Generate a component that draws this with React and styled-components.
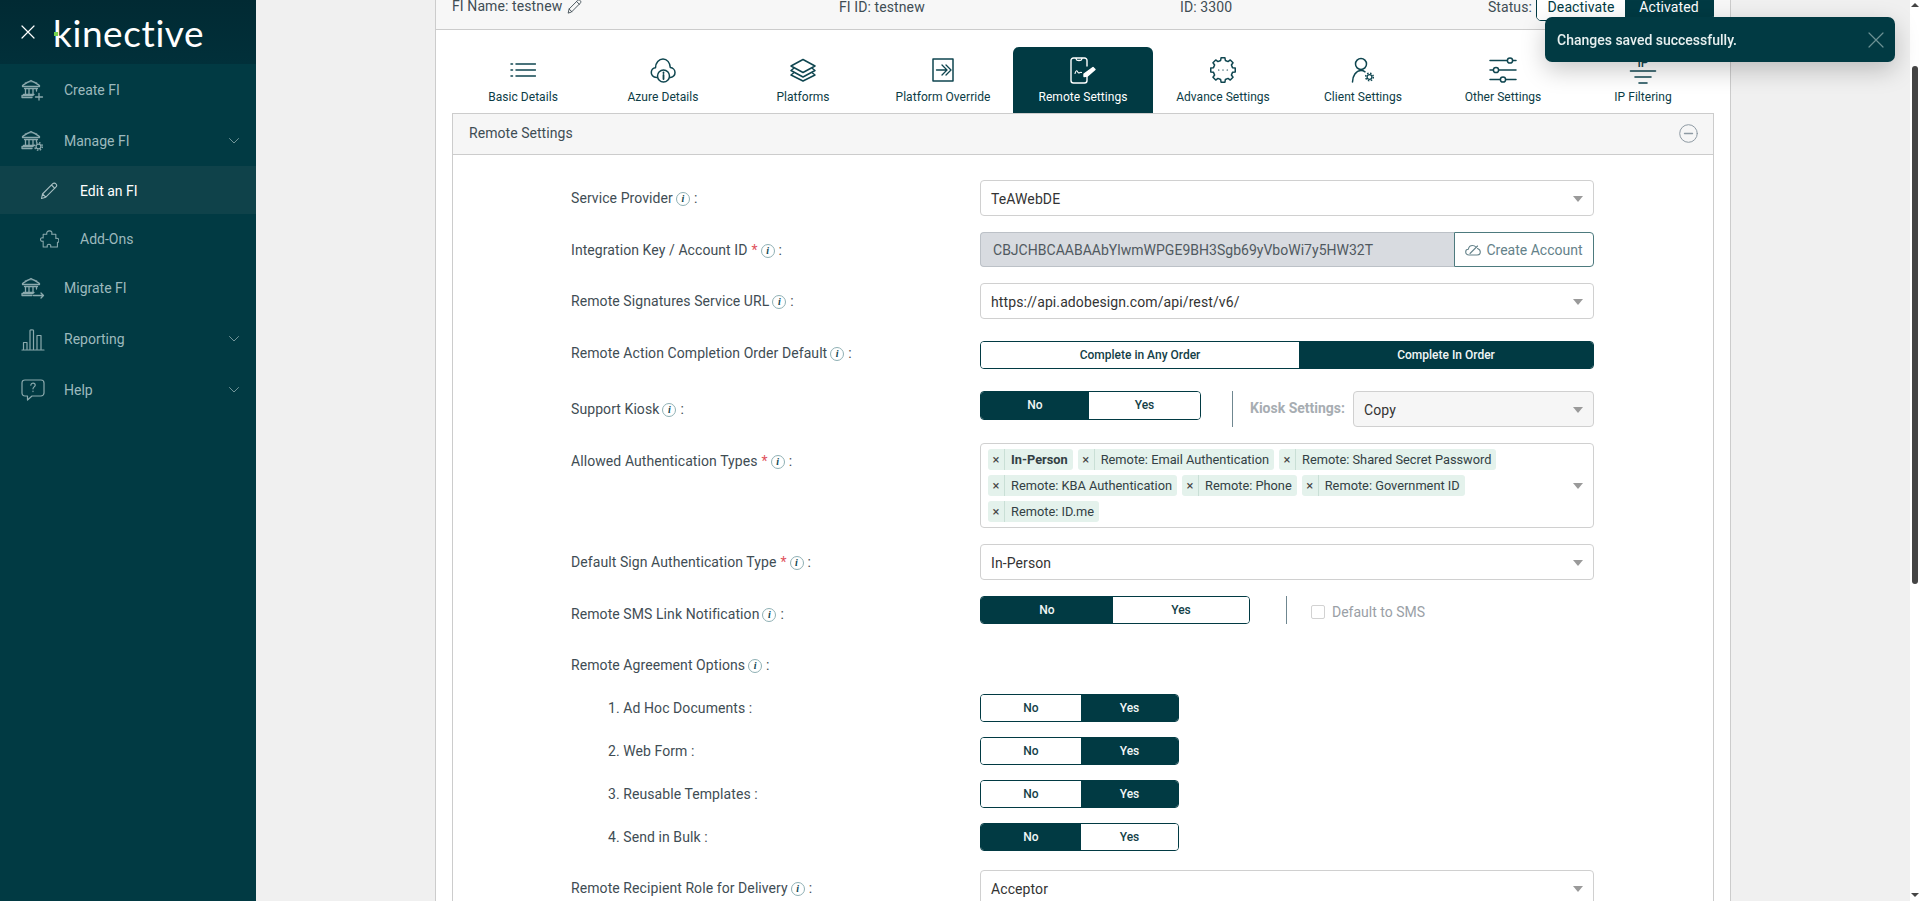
import React from "react";
import styled, { createGlobalStyle } from "styled-components";

const DARK = "#013a43";
const FONT = `Roboto, "Liberation Sans", sans-serif`;

const GlobalStyle = createGlobalStyle`
  html, body { margin: 0; height: 100%; overflow: hidden; }
  body { font-family: ${FONT}; font-size: 14px; color: #3d4b52; background: #f0f0f0; }
  #root { height: 100%; }
  * { box-sizing: border-box; }
`;

/* ---------- icons ---------- */
const Svg = ({ size = 24, w, h, vb, sw = 1.3, children }) => (
  <svg
    width={w || size}
    height={h || size}
    viewBox={vb || `0 0 ${w || size} ${h || size}`}
    fill="none"
    stroke="currentColor"
    strokeWidth={sw}
    strokeLinecap="round"
    strokeLinejoin="round"
  >
    {children}
  </svg>
);

const MiniGear = ({ x, y }) => (
  <g>
    <circle cx={x} cy={y} r="2.4" strokeWidth="1.2" />
    <circle cx={x} cy={y} r="3.8" strokeWidth="1.5" strokeDasharray="1.5 1.5" strokeLinecap="butt" />
  </g>
);

const Bank = ({ children }) => (
  <Svg w={24} h={22}>
    <path d="M1.5 6.5C4 5 7 3 10 1.500C13 3 16 5 18.500 6.500V7.500H1.500Z" />
    <path d="M4 3.800C7 2.300 13 2.300 16 3.800" strokeWidth="0.8" />
    <path d="M3.500 9.500H16.500M4.500 9.500V15M8 9.500V15M12 9.500V15M15.500 9.500V12" />
    <path d="M2.500 15.500H13M1 18.500V16.500H12M1 18.500H11" />
    {children}
  </Svg>
);

const CreateIcon = () => (
  <Bank>
    <path d="M18 14.500V21M14.500 18H21.500" />
  </Bank>
);
const ManageIcon = () => (
  <Bank>
    <MiniGear x={17.500} y={16.500} />
  </Bank>
);
const MigrateIcon = () => (
  <Bank>
    <path d="M12.500 18.500H22.500M20 16L22.500 18.500L20 21" />
  </Bank>
);
const EditIcon = ({ size = 18 }) => (
  <Svg size={size} vb="0 0 18 18" sw={1.1}>
    <path d="M1.500 16.500L2.500 12L12.800 1.700C13.600 0.900 15 0.900 15.900 1.900C16.800 2.800 16.800 4.100 16 4.900L5.800 15.200ZM2.500 12L5.800 15.200M11.500 3L14.800 6.300" />
  </Svg>
);
const PuzzleIcon = () => (
  <Svg w={19} h={20} vb="0 0 18 17" sw={1}>
    <path d="M6.500 4H3V7.500C1 6.800 0.500 8 0.500 9S1.300 11.200 3 10.500V16H7C6.300 14 7.500 13.500 8.500 13.500S10.700 14.300 10 16H16.500V11.500C18 12 17.800 10.500 17.800 9.500S17 7.300 15 8V4H11C11.800 2.300 11 0.800 9 0.800S6 2.300 6.500 4Z" />
  </Svg>
);
const ChartIcon = () => (
  <Svg w={24} h={24} sw={1.2}>
    <path d="M1 23H23M2.500 22V15.500H6V22M9 22V3.500C9 2.500 12.500 2.500 12.500 3.500V22M16 22V8.500H20V22" />
  </Svg>
);
const HelpIcon = () => (
  <Svg w={24} h={22} sw={1.2}>
    <path d="M4 1H20C21.500 1 23 2 23 4V14C23 15.500 21.500 17 20 17H11L6.500 21V17H4C2 17 1 15.500 1 14V4C1 2 2 1 4 1Z" />
    <path d="M9.800 6.200C10 4.800 11 4.200 12 4.200C13.300 4.200 14.200 5 14.200 6.200C14.200 7.800 12 8 12 9.800M12 12.200V12.600" />
  </Svg>
);
const Chevron = () => (
  <Svg w={10} h={6} sw={0.9}>
    <path d="M0.500 0.500L5 5L9.500 0.500" />
  </Svg>
);
const CloseX = ({ size }) => (
  <Svg size={size} sw={1.200}>
    <path d={`M1 1L${size - 1} ${size - 1}M${size - 1} 1L1 ${size - 1}`} />
  </Svg>
);

const ListIcon = () => (
  <Svg w={26} h={16} sw={1.500}>
    <path d="M1 2H2.500M1 8H2.500M1 14H2.500" />
    <path d="M6 2H25.500M6 8H25.500M6 14H25.500" />
  </Svg>
);
const CloudIcon = () => (
  <Svg w={26} h={26} sw={1.500}>
    <path d="M6.500 20.500C3 20.500 1 17.800 1.300 15C1.600 12.500 3.500 11 5.500 10.800C5.500 6 9 2 13 2C17 2 20 5.500 20.300 10.500C23 10.800 25 13 25 15.500C25 18 23.300 20 20.500 20.500" />
    <circle cx="13.500" cy="19" r="6" />
    <path d="M13.500 18V22M13.500 15.500V16" strokeWidth="1.800" />
  </Svg>
);
const LayersIcon = () => (
  <Svg w={26} h={24} sw={1.500}>
    <path d="M13 1.500L25 8L13 14.500L1 8Z" />
    <path d="M3.500 10.500L1 12.500L13 19L25 12.500L22.500 10.500" />
    <path d="M3.500 15L1 17L13 23L25 17L22.500 15" />
  </Svg>
);
const OverrideIcon = () => (
  <Svg w={22} h={24} sw={1.500}>
    <path d="M1 1H21V23H1Z" />
    <path d="M4.500 12H14M10 7L15 12L10 17M14 7L19 12L14 17" strokeWidth="1.300" />
  </Svg>
);
const PhoneIcon = () => (
  <Svg w={26} h={27} sw={1.400}>
    <path d="M17 9V3.500C17 2 16 1 14.500 1H3.500C2 1 1 2 1 3.500V23.500C1 25 2 26 3.500 26H14.500C16 26 17 25 17 23.500V17" />
    <path d="M6 1.500C6.500 3.500 7 3.500 9 3.500C11 3.500 11.500 3.500 12 1.500" />
    <path d="M5 16.500C6 13 7 13 8 15.500C9 17 10 14.500 11.500 15.500" strokeWidth="1.100" />
    <path d="M14 17L23 10.500L25 12.500L17.500 19L14 19.500Z" fill="currentColor" />
  </Svg>
);

// square-toothed outline for the Advance Settings tab
const gearPath = (c, outer, inner, teeth) => {
  const step = (Math.PI * 2) / teeth;
  const pts = [];
  for (let i = 0; i < teeth; i++) {
    const a = i * step - Math.PI / 2;
    [
      [inner, a - step * 0.31],
      [outer, a - step * 0.2],
      [outer, a + step * 0.2],
      [inner, a + step * 0.31],
    ].forEach(([r, t]) => pts.push(`${(c + r * Math.cos(t)).toFixed(2)} ${(c + r * Math.sin(t)).toFixed(2)}`));
  }
  return `M${pts.join("L")}Z`;
};
const GearDotsIcon = () => (
  <Svg size={26} sw={1.500}>
    <path d={gearPath(13, 12.400, 9.800, 8)} />
    <path d="M8.500 13H8.900M12.800 13H13.200M17.100 13H17.500" strokeWidth="1.200" />
  </Svg>
);
const UserGearIcon = () => (
  <Svg w={24} h={26} sw={1.500}>
    <circle cx="10" cy="7" r="5.500" />
    <path d="M1.500 25C1.500 19 5 13.500 10 13.500C11.500 13.500 13 14 14 14.800" />
    <MiniGear x={18.500} y={20} />
  </Svg>
);
const SlidersIcon = () => (
  <Svg w={28} h={26} sw={1.500}>
    <path d="M1 3.500H18M24 3.500H27M1 13H4M10 13H27M1 22.500H11M17 22.500H27" />
    <circle cx="21" cy="3.500" r="2.600" />
    <circle cx="7" cy="13" r="2.600" />
    <circle cx="14" cy="22.500" r="2.600" />
  </Svg>
);
const FilterIcon = () => (
  <Svg w={28} h={36} sw={1.600}>
    <text x="14" y="14.500" textAnchor="middle" fontSize="12" fontWeight="500" fill="currentColor" stroke="none" fontFamily="Roboto">IP</text>
    <path d="M1.500 19H26.500M6 25H22M10 31H18" />
  </Svg>
);
const CloudCheck = () => (
  <Svg w={16} h={12} sw={1.100}>
    <path d="M4 11C2 11 0.700 9.700 0.700 8C0.700 6.500 2 5.300 3.300 5.300C3.700 3 5.500 1.500 7.500 1.500C9 1.500 10 2 10.800 3M12.500 4.500C14 5 15.300 6.300 15.300 8C15.300 9.700 14 11 12 11H4" />
    <path d="M5 9.500L12.500 2" />
  </Svg>
);
const MinusCircle = () => (
  <Svg size={19} sw={1}>
    <circle cx="9.500" cy="9.500" r="8.800" stroke="#8e9aa3" />
    <path d="M5.500 9.500H13.500" stroke="#8e9aa3" strokeWidth="1.400" />
  </Svg>
);

/* ---------- shell ---------- */
const Page = styled.div`
  display: flex;
  height: 100vh;
  overflow: hidden;
`;
const Sidebar = styled.aside`
  width: 256px;
  flex: none;
  background: ${DARK};
`;
const Brand = styled.div`
  height: 64px;
  display: flex;
  align-items: center;
  gap: 18px;
  padding-left: 21px;
  color: #fff;
  background: linear-gradient(180deg, #012a33, #01303a);
`;
const Logo = styled.div`
  position: relative;
  font-family: Lato, sans-serif;
  font-weight: 400;
  font-size: 37px;
  line-height: 44px;
  letter-spacing: 0.6px;
  margin-top: 1px;
`;
const LogoDot = styled.i`
  position: absolute;
  left: 1px;
  top: 21px;
  width: 4px;
  height: 4px;
  background: #74d14c;
`;
const NavItem = styled.div`
  display: flex;
  align-items: center;
  height: ${(p) => (p.$sub ? 48 : 51)}px;
  padding-left: ${(p) => (p.$sub ? 40 : 21)}px;
  padding-top: ${(p) => (p.$sub ? 1 : 0)}px;
  padding-right: 17px;
  background: ${(p) => (p.$active ? "#0f424a" : "transparent")};
  color: ${(p) => (p.$active ? "#fff" : "#9db9bd")};
`;
const NavIcon = styled.span`
  display: flex;
  align-items: center;
  width: ${(p) => (p.$sub ? 40 : 43)}px;
  color: ${(p) => (p.$active ? "#a8bfc2" : "#8caaae")};
`;
const NavLabel = styled.span`
  flex: 1;
`;
const NavCaret = styled.span`
  display: flex;
  color: #7f9fa3;
`;
const Main = styled.main`
  flex: 1;
  padding-left: 179px;
  overflow: hidden;
`;
const Sheet = styled.div`
  width: 1296px;
  min-height: 100%;
  background: #fff;
  border-left: 1px solid #ccc;
  border-right: 1px solid #ccc;
`;
const Track = styled.div`
  width: 10px;
  flex: none;
  background: #fff;
  display: flex;
  flex-direction: column;
  align-items: center;
`;
const Arrow = styled.i`
  width: 0;
  height: 0;
  border-left: 4px solid transparent;
  border-right: 4px solid transparent;
  border-${(p) => (p.$down ? "top" : "bottom")}: 4px solid #454545;
  margin-top: ${(p) => (p.$down ? "auto" : "3px")};
  margin-bottom: ${(p) => (p.$down ? "4px" : 0)};
`;
const Thumb = styled.div`
  width: 6px;
  height: 518px;
  margin-top: 59px;
  border-radius: 3px;
  background: #454545;
`;

/* ---------- top bar and tabs ---------- */
const TopBar = styled.div`
  display: grid;
  grid-template-columns: 387px 341px 307px 1fr;
  grid-template-rows: 13px;
  align-items: center;
  height: 30px;
  padding: 0 16px 16px;
  background: #f7f7f7;
  border-bottom: 1px solid #ccc;
  color: #3f4d54;
  line-height: 14px;
  letter-spacing: 0.1px;
`;
const NameCell = styled.div`
  display: flex;
  gap: 5px;
  color: #3f4d54;
`;
const StatusCell = styled.div`
  display: flex;
  align-items: center;
  justify-content: flex-end;
  gap: 4px;
`;
const StatusSwitch = styled.div`
  display: flex;
  width: 178px;
  height: 28px;
  border: 1px solid ${DARK};
  border-radius: 5px;
  overflow: hidden;
`;
const StatusOption = styled.div`
  flex: 1;
  display: flex;
  align-items: center;
  justify-content: center;
  background: ${(p) => (p.$on ? DARK : "#fff")};
  color: ${(p) => (p.$on ? "#fff" : DARK)};
  font-size: 14px;
`;
const Tabs = styled.div`
  display: flex;
  padding: 17px 16px 0 17px;
`;
const Tab = styled.div`
  width: 140px;
  height: 66px;
  display: flex;
  flex-direction: column;
  align-items: center;
  border-radius: 6px 6px 0 0;
  background: ${(p) => (p.$on ? DARK : "transparent")};
  color: ${(p) => (p.$on ? "#fff" : "#0c3c46")};
  font-size: 12px;
  letter-spacing: 0.05px;
`;
const TabIcon = styled.div`
  height: 43px;
  padding-top: 3px;
  display: flex;
  align-items: center;
  justify-content: center;
  color: ${(p) => (p.$on ? "#fff" : "#0f4650")};
`;
const Panel = styled.section`
  margin: 0 16px 0;
  border: 1px solid #ccc;
  border-bottom: 0;
`;
const PanelHead = styled.div`
  height: 41px;
  display: flex;
  align-items: center;
  justify-content: space-between;
  padding: 0 15px 2px 16px;
  background: #f6f6f6;
  border-bottom: 1px solid #ccc;
  color: #3f4d54;
  letter-spacing: 0.05px;
`;
const PanelBody = styled.div`
  padding: 25px 118px 0;
`;

/* ---------- form ---------- */
const Row = styled.div`
  display: flex;
  align-items: flex-start;
  margin-bottom: ${(p) => p.$after}px;
`;
const Label = styled.div`
  flex: none;
  width: ${(p) => (p.$indent ? 372 : 409)}px;
  margin-left: ${(p) => (p.$indent ? 37 : 0)}px;
  padding-top: ${(p) => p.$top ?? 8}px;
  line-height: 20px;
  color: #3f4d54;
  white-space: nowrap;
  letter-spacing: 0.08px;
`;
const Star = styled.span`
  color: #e0525c;
  margin-left: 4px;
`;
const Info = styled.i`
  display: inline-flex;
  align-items: center;
  justify-content: center;
  width: 14px;
  height: 14px;
  margin: 0 4px 0 3px;
  vertical-align: 1px;
  border: 1px solid #8fb0b4;
  border-radius: 50%;
  color: #0f4650;
  font: italic 700 10px "Liberation Serif", serif;
`;
const Control = styled.div`
  width: 614px;
  display: flex;
  align-items: flex-start;
`;
const SelectBox = styled.div`
  flex: 1;
  display: flex;
  align-items: center;
  justify-content: space-between;
  height: ${(p) => (p.$tall ? "85px" : "36px")};
  padding: ${(p) => (p.$tall ? "0 10px 0 7px" : "1px 10px 0 10px")};
  border: 1px solid #d0d0d0;
  border-radius: 4px;
  background: ${(p) => (p.$muted ? "#f6f6f6" : "#fff")};
  color: #333;
  letter-spacing: 0.1px;
`;
const Caret = styled.i`
  flex: none;
  width: 0;
  height: 0;
  border-left: 5px solid transparent;
  border-right: 5px solid transparent;
  border-top: 6px solid #9a9a9a;
`;
const KeyInput = styled.div`
  flex: 1;
  height: 35px;
  display: flex;
  align-items: center;
  padding-left: 12px;
  background: #d8dbe0;
  border: 1px solid #bcc1c7;
  border-right: 0;
  border-radius: 4px 0 0 4px;
  color: #50595f;
  letter-spacing: 0.02px;
`;
const KeyButton = styled.div`
  width: 140px;
  height: 35px;
  display: flex;
  align-items: center;
  justify-content: center;
  gap: 5px;
  background: #fff;
  border: 1px solid #4d7a7e;
  border-radius: 0 4px 4px 0;
  color: #64828a;
`;
const Switch = styled.div`
  display: grid;
  grid-template-columns: ${(p) => p.$first}px 1fr;
  width: ${(p) => p.$width}px;
  height: ${(p) => p.$h || 28}px;
  border: 1px solid ${DARK};
  border-radius: 4px;
  overflow: hidden;
  flex: none;
`;
const SwitchOption = styled.div`
  display: flex;
  align-items: center;
  justify-content: center;
  padding-bottom: 1px;
  font-size: 12px;
  font-weight: 500;
  background: ${(p) => (p.$on ? DARK : "#fff")};
  color: ${(p) => (p.$on ? "#f1f6f6" : "#143f48")};
`;
const Divider = styled.div`
  flex: none;
  width: 1px;
  height: ${(p) => p.$h}px;
  margin: 0 ${(p) => p.$right}px 0 ${(p) => p.$left}px;
  background: #6f8790;
`;
const KioskLabel = styled.span`
  flex: none;
  padding-top: 9px;
  margin-right: 8px;
  font-size: 14px;
  font-weight: 700;
  color: #a7adb2;
`;
const TagWrap = styled.div`
  display: flex;
  flex-wrap: wrap;
  gap: 5px;
  width: 570px;
`;
const Tag = styled.div`
  display: flex;
  align-items: center;
  height: 21px;
  background: #e4f2ec;
  border-radius: 3px;
  font-size: 12.8px;
  font-weight: ${(p) => (p.$bold ? 700 : 400)};
  color: #333f44;
  letter-spacing: 0;
`;
const TagClose = styled.span`
  width: 17px;
  height: 21px;
  display: flex;
  align-items: center;
  justify-content: center;
  border-right: 1px solid #c9dfd6;
  font-size: 13px;
  font-weight: 400;
  color: #444;
`;
const TagText = styled.span`
  padding: 0 5px 0 6px;
`;
const CheckRow = styled.label`
  display: flex;
  align-items: center;
  gap: 7px;
  height: 28px;
  padding-top: 3px;
  color: #9aa0a6;
`;
const CheckBox = styled.i`
  width: 14px;
  height: 14px;
  border: 1px solid #d2d2d2;
  border-radius: 2px;
`;
const Toast = styled.div`
  position: fixed;
  top: 17px;
  right: 25px;
  width: 350px;
  height: 45px;
  display: flex;
  align-items: center;
  justify-content: space-between;
  padding: 0 11px 0 12px;
  border-radius: 7px;
  background: ${DARK};
  color: #e8f0f0;
  font-weight: 500;
  box-shadow: 0 8px 24px rgba(0, 0, 0, 0.22);
`;
const ToastClose = styled.span`
  display: flex;
  color: #6c9194;
`;

/* ---------- data ---------- */
const NAV = [
  { label: "Create FI", icon: <CreateIcon /> },
  { label: "Manage FI", icon: <ManageIcon />, caret: true },
  { label: "Edit an FI", icon: <EditIcon />, sub: true, active: true },
  { label: "Add-Ons", icon: <PuzzleIcon />, sub: true },
  { label: "Migrate FI", icon: <MigrateIcon /> },
  { label: "Reporting", icon: <ChartIcon />, caret: true },
  { label: "Help", icon: <HelpIcon />, caret: true },
];

const TABS = [
  { label: "Basic Details", icon: <ListIcon /> },
  { label: "Azure Details", icon: <CloudIcon /> },
  { label: "Platforms", icon: <LayersIcon /> },
  { label: "Platform Override", icon: <OverrideIcon /> },
  { label: "Remote Settings", icon: <PhoneIcon />, on: true },
  { label: "Advance Settings", icon: <GearDotsIcon /> },
  { label: "Client Settings", icon: <UserGearIcon /> },
  { label: "Other Settings", icon: <SlidersIcon /> },
  { label: "IP Filtering", icon: <FilterIcon /> },
];

const AUTH_TYPES = [
  "In-Person",
  "Remote: Email Authentication",
  "Remote: Shared Secret Password",
  "Remote: KBA Authentication",
  "Remote: Phone",
  "Remote: Government ID",
  "Remote: ID.me",
];

const AGREEMENTS = [
  { label: "1. Ad Hoc Documents :", on: 1 },
  { label: "2. Web Form :", on: 1 },
  { label: "3. Reusable Templates :", on: 1 },
  { label: "4. Send in Bulk :", on: 0 },
];

const Select = ({ value, muted }) => (
  <SelectBox $muted={muted}>
    {value}
    <Caret />
  </SelectBox>
);

const Toggle = ({ width, first, h, options = ["No", "Yes"], on }) => (
  <Switch $width={width} $first={first} $h={h}>
    {options.map((o, i) => (
      <SwitchOption key={o} $on={i === on}>
        {o}
      </SwitchOption>
    ))}
  </Switch>
);

const FieldLabel = ({ text, required, top }) => (
  <Label $top={top}>
    {text}
    {required && <Star>*</Star>}
    <Info>i</Info>:
  </Label>
);

export default function App() {
  return (
    <Page>
      <GlobalStyle />
      <Sidebar>
        <Brand>
          <CloseX size={14} />
          <Logo>
            kinective
            <LogoDot />
          </Logo>
        </Brand>
        {NAV.map((n) => (
          <NavItem key={n.label} $sub={n.sub} $active={n.active}>
            <NavIcon $sub={n.sub} $active={n.active}>{n.icon}</NavIcon>
            <NavLabel>{n.label}</NavLabel>
            {n.caret && (
              <NavCaret>
                <Chevron />
              </NavCaret>
            )}
          </NavItem>
        ))}
      </Sidebar>

      <Main>
        <Sheet>
          <TopBar>
            <NameCell>
              FI Name: testnew
              <EditIcon size={15} />
            </NameCell>
            <div>FI ID: testnew</div>
            <div>ID: 3300</div>
            <StatusCell>
              Status:
              <StatusSwitch>
                <StatusOption>Deactivate</StatusOption>
                <StatusOption $on>Activated</StatusOption>
              </StatusSwitch>
            </StatusCell>
          </TopBar>

          <Tabs>
            {TABS.map((t) => (
              <Tab key={t.label} $on={t.on}>
                <TabIcon $on={t.on}>{t.icon}</TabIcon>
                {t.label}
              </Tab>
            ))}
          </Tabs>

          <Panel>
            <PanelHead>
              Remote Settings
              <MinusCircle />
            </PanelHead>
            <PanelBody>
              <Row $after={16}>
                <FieldLabel text="Service Provider" />
                <Control>
                  <Select value="TeAWebDE" />
                </Control>
              </Row>
              <Row $after={16}>
                <FieldLabel text="Integration Key / Account ID" required />
                <Control>
                  <KeyInput>CBJCHBCAABAAbYlwmWPGE9BH3Sgb69yVboWi7y5HW32T</KeyInput>
                  <KeyButton>
                    <CloudCheck />
                    Create Account
                  </KeyButton>
                </Control>
              </Row>
              <Row $after={22}>
                <FieldLabel text="Remote Signatures Service URL" />
                <Control>
                  <Select value="https://api.adobesign.com/api/rest/v6/" />
                </Control>
              </Row>
              <Row $after={22}>
                <FieldLabel text="Remote Action Completion Order Default" top={2} />
                <Control>
                  <Toggle width={614} first={318} options={["Complete in Any Order", "Complete In Order"]} on={1} />
                </Control>
              </Row>
              <Row $after={16}>
                <FieldLabel text="Support Kiosk" />
                <Control>
                  <Toggle width={221} first={108} h={29} on={0} />
                  <Divider $h={36} $left={31} $right={17} />
                  <KioskLabel>Kiosk Settings:</KioskLabel>
                  <Select value="Copy" muted />
                </Control>
              </Row>
              <Row $after={16}>
                <FieldLabel text="Allowed Authentication Types" required />
                <Control>
                  <SelectBox $tall>
                    <TagWrap>
                      {AUTH_TYPES.map((a, i) => (
                        <Tag key={a} $bold={i === 0}>
                          <TagClose>×</TagClose>
                          <TagText>{a}</TagText>
                        </Tag>
                      ))}
                    </TagWrap>
                    <Caret />
                  </SelectBox>
                </Control>
              </Row>
              <Row $after={16}>
                <FieldLabel text="Default Sign Authentication Type" required />
                <Control>
                  <Select value="In-Person" />
                </Control>
              </Row>
              <Row $after={31}>
                <FieldLabel text="Remote SMS Link Notification" />
                <Control>
                  <Toggle width={270} first={132} on={0} />
                  <Divider $h={28} $left={36} $right={24} />
                  <CheckRow>
                    <CheckBox />
                    Default to SMS
                  </CheckRow>
                </Control>
              </Row>
              <Row $after={19}>
                <FieldLabel text="Remote Agreement Options" top={0} />
              </Row>
              {AGREEMENTS.map((a, i) => (
                <Row key={a.label} $after={i === 3 ? 19 : 15}>
                  <Label $indent $top={4}>{a.label}</Label>
                  <Control>
                    <Toggle width={199} first={100} on={a.on} />
                  </Control>
                </Row>
              ))}
              <Row $after={16}>
                <FieldLabel text="Remote Recipient Role for Delivery" />
                <Control>
                  <Select value="Acceptor" />
                </Control>
              </Row>
            </PanelBody>
          </Panel>
        </Sheet>
      </Main>

      <Track>
        <Arrow />
        <Thumb />
        <Arrow $down />
      </Track>

      <Toast>
        Changes saved successfully.
        <ToastClose>
          <CloseX size={16} />
        </ToastClose>
      </Toast>
    </Page>
  );
}
